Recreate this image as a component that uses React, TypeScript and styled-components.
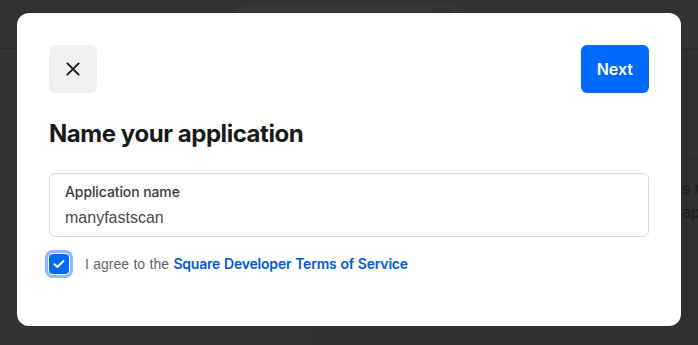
import React from 'react';
import styled, { createGlobalStyle } from 'styled-components';

const GlobalStyle = createGlobalStyle`
  html, body {
    margin: 0;
    padding: 0;
    height: 100%;
    overflow: hidden;
    background: #323232;
    font-family: Inter, 'Liberation Sans', sans-serif;
  }
  * { box-sizing: border-box; }
`;

export default function App() {
  return (
    <>
      <GlobalStyle />
      <Page>
        <PageHeader>
          <SearchPill>
            <PillKey />
          </SearchPill>
        </PageHeader>
        <PageBody>
          <Sidebar />
          <Main>
            <MainTop />
            <MainText>
              <span>s r</span>
              <span>app</span>
            </MainText>
          </Main>
        </PageBody>
      </Page>

      <Backdrop>
        <Dialog role="dialog" aria-labelledby="dlg-title">
          <DialogHeader>
            <CloseButton aria-label="Close">
              <svg width="14" height="14" viewBox="0 0 14 14" fill="none">
                <path d="M1.5 1.5 12.5 12.5M12.5 1.5 1.5 12.5" stroke="#1a1a1a" strokeWidth="1.8" strokeLinecap="square" />
              </svg>
            </CloseButton>
            <PrimaryButton>Next</PrimaryButton>
          </DialogHeader>

          <Title id="dlg-title">Name your application</Title>

          <Field>
            <FieldLabel>Application name</FieldLabel>
            <FieldInput defaultValue="manyfastscan" />
          </Field>

          <CheckRow>
            <CheckBox>
              <svg width="12" height="10" viewBox="0 0 12 10" fill="none">
                <path d="M1.5 5.2 4.4 8 10.5 2" stroke="#fff" strokeWidth="2" strokeLinecap="round" strokeLinejoin="round" />
              </svg>
            </CheckBox>
            <CheckText>
              I agree to the <TermsLink href="#">Square Developer Terms of Service</TermsLink>
            </CheckText>
          </CheckRow>
        </Dialog>
      </Backdrop>
    </>
  );
}

/* dimmed page behind the dialog */

const Page = styled.div`
  width: 100vw;
  height: 100vh;
  display: flex;
  flex-direction: column;
`;

const PageHeader = styled.div`
  height: 49px;
  flex-shrink: 0;
  border-bottom: 1px solid #292929;
  display: flex;
  justify-content: center;
`;

const SearchPill = styled.div`
  width: 237px;
  height: 40px;
  margin-top: 3px;
  border-radius: 20px;
  background: #363636;
  display: flex;
  justify-content: flex-end;
  padding: 4px 14px 0 0;
`;

const PillKey = styled.div`
  width: 24px;
  height: 20px;
  border: 1px solid #3a3a3a;
  border-radius: 5px;
  background: #313131;
`;

const PageBody = styled.div`
  flex: 1;
  display: flex;
  min-width: 0;
`;

const Sidebar = styled.div`
  width: 313px;
  flex-shrink: 0;
  background: #333333;
`;

const Main = styled.div`
  flex: 1;
  min-width: 0;
  overflow: hidden;
  background: #303030;
  display: flex;
  flex-direction: column;
`;

const MainTop = styled.div`
  height: 110px;
  border-bottom: 1px solid #292929;
`;

const MainText = styled.div`
  display: flex;
  flex-direction: column;
  padding: 20px 0 0 369px;
  gap: 4px;
  color: #1b1b1b;
  font-size: 16px;
  line-height: 20px;
  white-space: nowrap;
  font-family: 'Liberation Sans', sans-serif;
`;

/* dialog */

const Backdrop = styled.div`
  position: fixed;
  inset: 0;
  display: flex;
  align-items: flex-start;
  padding: 13px 17px;
`;

const Dialog = styled.div`
  width: 664px;
  height: 313px;
  background: #fff;
  border-radius: 12px;
  padding: 32px;
  display: flex;
  flex-direction: column;
`;

const DialogHeader = styled.div`
  display: flex;
  justify-content: space-between;
  align-items: center;
`;

const CloseButton = styled.button`
  width: 48px;
  height: 48px;
  border: none;
  border-radius: 6px;
  background: #f0f0f0;
  display: flex;
  align-items: center;
  justify-content: center;
  padding: 0;
  cursor: pointer;
`;

const PrimaryButton = styled.button`
  height: 48px;
  padding: 0 16px;
  border: none;
  border-radius: 6px;
  background: #006aff;
  color: #fff;
  font-family: Inter, 'Liberation Sans', sans-serif;
  font-size: 16px;
  font-weight: 600;
  cursor: pointer;
`;

const Title = styled.h2`
  margin: 25px 0 0;
  font-size: 24px;
  line-height: 32px;
  font-weight: 700;
  color: #1a1a1a;
  letter-spacing: -0.45px;
`;

const Field = styled.label`
  margin-top: 23px;
  height: 64px;
  border: 1px solid #dadada;
  border-radius: 6px;
  padding: 9px 15px 0;
  display: flex;
  flex-direction: column;
`;

const FieldLabel = styled.span`
  font-size: 14px;
  line-height: 18px;
  font-weight: 500;
  color: #3a3a3a;
  letter-spacing: -0.1px;
`;

const FieldInput = styled.input`
  border: none;
  outline: none;
  padding: 0;
  margin-top: 6px;
  font-family: 'Liberation Sans', Arial, sans-serif;
  font-size: 16px;
  line-height: 22px;
  color: #4a4a4a;
`;

const CheckRow = styled.div`
  margin-top: 17px;
  display: flex;
  align-items: center;
  gap: 16px;
`;

const CheckBox = styled.span`
  width: 20px;
  height: 20px;
  border-radius: 4px;
  background: #006aff;
  box-shadow: 0 0 0 1px #fff, 0 0 0 4px #8db9ff;
  display: flex;
  align-items: center;
  justify-content: center;
  flex-shrink: 0;
`;

const CheckText = styled.span`
  font-family: 'Liberation Sans', Arial, sans-serif;
  font-size: 14px;
  line-height: 20px;
  color: #666;
  word-spacing: 0.5px;
`;

const TermsLink = styled.a`
  font-family: Inter, 'Liberation Sans', sans-serif;
  color: #005ad9;
  font-weight: 600;
  text-decoration: none;
  letter-spacing: -0.2px;
`;
